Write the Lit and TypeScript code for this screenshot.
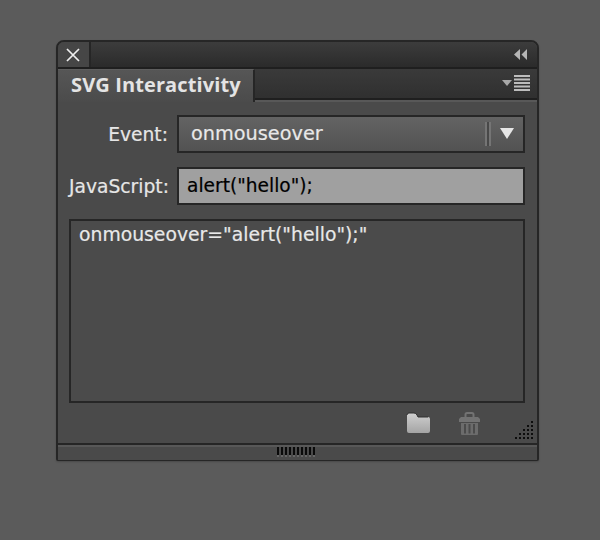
import { LitElement, html, css, svg } from "lit";
import { customElement } from "lit/decorators.js";

const dots: [number, number][] = [];
for (let r = 0; r < 5; r++) {
  for (let c = 4 - r; c < 5; c++) dots.push([c, r]);
}

@customElement("app-root")
export class AppRoot extends LitElement {
  static styles = css`
    :host {
      display: block;
      width: 600px;
      height: 540px;
      background: #5b5b5b;
      padding: 40px 61px 0 56px;
      box-sizing: border-box;
      font-family: "DejaVu Sans", sans-serif;
      overflow: hidden;
    }
    * { box-sizing: border-box; }
    .panel {
      width: 483px;
      height: 421px;
      border: 2px solid #262626;
      border-bottom-width: 1px;
      border-radius: 8px 8px 2px 2px;
      background: #4a4a4a;
      display: flex;
      flex-direction: column;
      box-shadow: 0 1px 2px rgba(0,0,0,.2);
      overflow: hidden;
    }
    .titlebar {
      height: 27px;
      flex: none;
      display: flex;
      justify-content: space-between;
      align-items: center;
      background: linear-gradient(#3c3c3c, #2b2b2b);
      border-bottom: 2px solid #1f1f1f;
    }
    .close {
      width: 33px;
      height: 25px;
      padding-right: 2px;
      background: #464646;
      border-right: 2px solid #262626;
      display: flex;
      align-items: center;
      justify-content: center;
    }
    .collapse { margin-right: 9px; display: flex; }
    .tabs {
      height: 33px;
      flex: none;
      display: flex;
      justify-content: space-between;
      background: linear-gradient(#3a3a3a, #2f2f2f);
      border-bottom: 2px solid #585858;
      position: relative;
    }
    .tab {
      width: 197px;
      height: 33px;
      margin-bottom: -2px;
      padding-left: 13px;
      background: linear-gradient(#565656, #4b4b4b);
      border-right: 2px solid #262626;
      border-top: 1px solid #5e5e5e;
      color: #e4e4e4;
      font-family: "Open Sans", "DejaVu Sans", sans-serif;
      font-size: 20px;
      letter-spacing: 0.12px;
      font-weight: 700;
      line-height: 29px;
      white-space: nowrap;
      z-index: 1;
    }
    .tabs::after {
      content: "";
      position: absolute;
      left: 197px; right: 0; bottom: 0;
      height: 2px;
      background: #1f1f1f;
    }
    .menu { margin: 6px 7px 0 0; display: flex; }
    .body {
      flex: 1;
      padding: 13px 12px 0 11px;
      display: flex;
      flex-direction: column;
    }
    .row {
      display: grid;
      grid-template-columns: 108px 348px;
      height: 38px;
      margin-bottom: 14px;
      align-items: center;
    }
    .label {
      text-align: right;
      color: #e6e6e6;
      font-size: 18.7px;
      padding-right: 9px;
      white-space: nowrap;
      -webkit-text-stroke: 0.2px currentColor;
    }
    .select {
      height: 38px;
      border: 2px solid #262626;
      background: linear-gradient(#636363, #525252);
      color: #e8e8e8;
      font-size: 19.3px;
      line-height: 33px;
      padding-left: 12px;
      display: flex;
      justify-content: space-between;
      -webkit-text-stroke: 0.2px currentColor;
    }
    .sel-icon { display: flex; align-self: center; }
    .input {
      height: 38px;
      border: 2px solid #262626;
      background: #a0a0a0;
      color: #000;
      font-size: 18.6px;
      line-height: 33px;
      padding-left: 8px;
      -webkit-text-stroke: 0.2px currentColor;
    }
    .output {
      width: 456px;
      height: 184px;
      border: 2px solid #262626;
      background: #4b4b4b;
      color: #e8e8e8;
      font-size: 18.8px;
      line-height: 26px;
      padding: 1px 8px;
      white-space: nowrap;
      -webkit-text-stroke: 0.2px currentColor;
    }
    .footer {
      height: 40px;
      flex: none;
      position: relative;
      display: flex;
      align-items: flex-start;
      padding: 9px 0 0 348px;
    }
    .folder { margin-right: 27px; display: flex; }
    .trash { display: flex; }
    .resize { position: absolute; right: 2px; top: 17px; display: flex; }
    .status {
      height: 17px;
      flex: none;
      border-top: 2px solid #262626;
      background: #4a4a4a;
      box-shadow: inset 0 2px 0 #585858;
      display: flex;
      justify-content: center;
      padding: 2px 1px 0 0;
    }
    svg { display: block; }
  `;

  render() {
    return html`
      <div class="panel">
        <div class="titlebar">
          <div class="close">
            <svg width="14" height="14" viewBox="0 0 14 14"><path d="M1 1 L13 13 M13 1 L1 13" stroke="#eee" stroke-width="1.7" fill="none"/></svg>
          </div>
          <div class="collapse">
            <svg width="14" height="12" viewBox="0 0 14 12">
              <path d="M6 0 V11 L0 5.5 Z M13 0 V11 L7.5 5.5 Z" fill="#b5b5b5"/>
            </svg>
          </div>
        </div>
        <div class="tabs">
          <div class="tab">SVG Interactivity</div>
          <div class="menu">
            <svg width="28" height="17" viewBox="0 0 28 17">
              <path d="M0 5 H10 L5 11 Z" fill="#a8a8a8"/>
              <path d="M12 1 H28 M12 4.500 H28 M12 8 H28 M12 11.500 H28 M12 15 H28" stroke="#bdbdbd" stroke-width="2" fill="none"/>
            </svg>
          </div>
        </div>
        <div class="body">
          <div class="row">
            <div class="label">Event:</div>
            <div class="select">
              <span>onmouseover</span>
              <span class="sel-icon">
                <svg width="38" height="24" viewBox="0 0 38 24">
                  <rect x="0" y="0" width="2" height="24" fill="#757575"/>
                  <rect x="2" y="0" width="2" height="24" fill="#484848"/>
                  <rect x="4" y="0" width="2" height="24" fill="#757575"/>
                  <path d="M15 6 H29 L22 17 Z" fill="#e6e6e6"/>
                </svg>
              </span>
            </div>
          </div>
          <div class="row">
            <div class="label">JavaScript:</div>
            <div class="input">alert("hello");</div>
          </div>
          <div class="output">onmouseover="alert("hello");"</div>
        </div>
        <div class="footer">
          <div class="folder">
            <svg width="25" height="22" viewBox="0 0 25 22">
              <defs><linearGradient id="f" x1="0" y1="0" x2="0" y2="1"><stop offset="0" stop-color="#d0d0d0"/><stop offset="1" stop-color="#a4a4a4"/></linearGradient></defs>
              <path d="M1 3 Q1 1 3 1 H8 Q10 1 11 3 L12 5 H22 Q24 5 24 7 V19 Q24 21 22 21 H3 Q1 21 1 19 Z" fill="url(#f)"/>
              <path d="M1 3 Q1 1 3 1 H8 Q10 1 11 3 L12 5 H22" stroke="#2e2e2e" stroke-width="1" fill="none"/>
            </svg>
          </div>
          <div class="trash">
            <svg width="23" height="24" viewBox="0 0 23 24" fill="none">
              <path d="M7.500 5 V2.500 Q7.500 1 9 1 H14 Q15.500 1 15.500 2.500 V5" stroke="#737373" stroke-width="2"/>
              <path d="M1 10 V7 L3 5 H20 L22 7 V10 Z" fill="#737373"/>
              <path d="M3 11 H20 V22 Q20 23 19 23 H4 Q3 23 3 22 Z" fill="#6c6c6c"/>
              <path d="M7 12 V21.500 M11.500 12 V21.500 M16 12 V21.500" stroke="#4b4b4b" stroke-width="2"/>
            </svg>
          </div>
          <div class="resize">
            <svg width="20" height="20" viewBox="0 0 20 20">
              ${dots.map(([c, r]) => svg`<rect x=${c * 4} y=${r * 4 + 1} width="2" height="2" fill="#0d0d0d"/>`)}
            </svg>
          </div>
        </div>
        <div class="status">
          <svg width="40" height="11" viewBox="0 0 40 11">
            ${[0, 1, 2, 3, 4, 5, 6, 7, 8, 9].map(
              (i) => svg`<rect x=${i * 4} y="0" width="2" height="8" fill="#0a0a0a"/><rect x=${i * 4} y="8" width="2" height="2" fill="#666"/>`
            )}
          </svg>
        </div>
      </div>
    `;
  }
}
